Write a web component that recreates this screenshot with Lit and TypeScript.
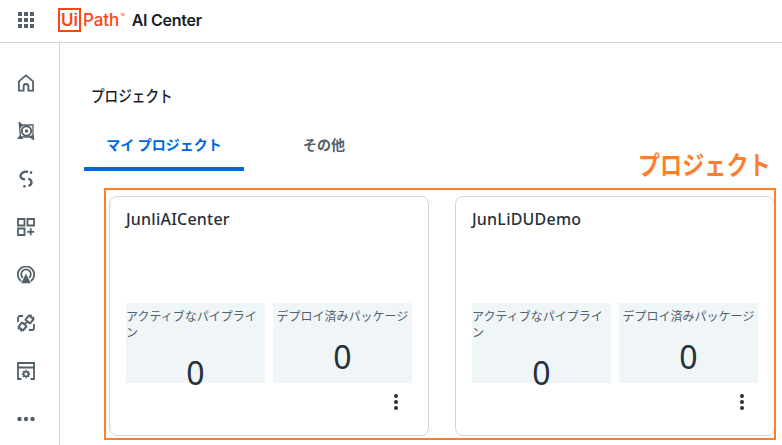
import { LitElement, html, css, svg } from "lit";
import { customElement } from "lit/decorators.js";

const P = "#526069";
const icons = [
  svg`<path d="M1.900 16.600V7.400L9 1.400l7.100 6v9.200h-4.700v-4.200a2.400 2.400 0 0 0-4.800 0v4.200z" fill="none" stroke="${P}" stroke-width="1.800"/>`,
  svg`<path d="M2.200 .6L5 3h11v10.500l.6 4L13 15H3.500L2.200 .6z" fill="none" stroke="${P}" stroke-width="1.300"/><circle cx="9.500" cy="9" r="4.700" fill="#fff" stroke="${P}" stroke-width="1.900"/><circle cx="9.500" cy="9" r="1.700" fill="${P}"/><path d="M0 17h6L3.600 12.500zM2 .6l4 2.900L3 6.500zM17 17.500l-5-3 4.500-2z" fill="${P}"/>`,
  svg`<path d="M11 1.800C6.500 1 3.500 3.500 3.500 6c0 2 2 3 4.500 3.700M11.500 8.500c2 1 3 2.500 3 4 0 1.500-1 2.700-3 3.300" fill="none" stroke="${P}" stroke-width="2.400"/><circle cx="14" cy="2.600" r="1.300" fill="${P}"/><circle cx="7.500" cy="16.200" r="1.300" fill="${P}"/>`,
  svg`<path d="M1 1h6.500v6.500H1zM10.500 1H17v6.500h-6.500zM1 10.500h6.500V17H1z" fill="none" stroke="${P}" stroke-width="1.800"/><path d="M13.700 10.300v7M10.200 13.800h7" fill="none" stroke="${P}" stroke-width="1.800"/>`,
  svg`<path d="M4.200 15.300A8.200 8.200 0 1 1 13.800 15.300" fill="none" stroke="${P}" stroke-width="1.800"/><path d="M5.800 11.800A4.800 4.800 0 1 1 12.200 11.800" fill="none" stroke="${P}" stroke-width="1.800"/><path d="M9 7.500l4.800 9.700H4.200z" fill="${P}"/>`,
  svg`<path d="M1 8V4a2 2 0 0 1 2-2h3M17 10v4a2 2 0 0 1-2 2h-3" fill="none" stroke="${P}" stroke-width="1.800"/><g transform="rotate(40 12.500 5.500)"><rect x="9.500" y="2.700" width="6" height="5.600" rx=".5" fill="none" stroke="${P}" stroke-width="2"/><path d="M11 .6v2.200M14 .6v2.200M12.500 8.300v2.400" stroke="${P}" stroke-width="1.800"/></g><g transform="rotate(40 5.500 12.500)"><rect x="2.500" y="9.700" width="6" height="5.600" rx=".5" fill="none" stroke="${P}" stroke-width="2"/><path d="M4 15.300v2.200M7 15.300v2.200M5.500 7.300v2.400" stroke="${P}" stroke-width="1.800"/></g>`,
  svg`<path d="M4.500 17H1V1h16v16h-3.500M1 5.500h16" fill="none" stroke="${P}" stroke-width="1.800"/><circle cx="9" cy="12" r="2.400" fill="none" stroke="${P}" stroke-width="1.800"/><path d="M9 7.800v1.500M9 14.700v1.500M4.800 12h1.500M11.700 12h1.500M6 9l1 1M11 14l1 1M12 9l-1 1M7 14l-1 1" stroke="${P}" stroke-width="1.400"/>`,
  svg`<circle cx="2.500" cy="9" r="2.200" fill="${P}"/><circle cx="9" cy="9" r="2.200" fill="${P}"/><circle cx="15.500" cy="9" r="2.200" fill="${P}"/>`,
];

const projects = ["JunliAICenter", "JunLiDUDemo"];

@customElement("app-root")
export class AppRoot extends LitElement {
  static styles = css`
    :host {
      display: block;
      width: 782px;
      height: 445px;
      overflow: hidden;
      position: relative;
      background: #fff;
      font-family: "Noto Sans", "Noto Sans CJK JP", sans-serif;
      color: #273139;
    }
    .top {
      height: 42px;
      box-sizing: content-box;
      border-bottom: 1px solid #cfd8dd;
      display: flex;
      align-items: center;
      padding-left: 18px;
    }
    .top > * {
      margin-bottom: 2px;
    }
    .grid-icon {
      display: block;
      margin-right: 25px;
    }
    .logo {
      display: flex;
      align-items: center;
      color: #fa4616;
      font-family: "Inter", sans-serif;
      font-weight: 500;
      font-size: 17px;
      letter-spacing: -0.1px;
      margin-left: -1px;
    }
    .ui {
      box-sizing: border-box;
      width: 23px;
      height: 24px;
      border: 2.500px solid #fa4616;
      display: flex;
      align-items: center;
      justify-content: center;
      margin-right: 2px;
      line-height: 1;
      font-weight: 600;
    }
    .tm {
      font-size: 3px;
      align-self: flex-start;
      margin: 5px 0 0 1px;
    }
    .product {
      font-family: "Inter", sans-serif;
      font-weight: 600;
      font-size: 16px;
      color: #182027;
      margin-left: 7px;
      letter-spacing: -0.25px;
    }
    .body {
      display: flex;
      height: 402px;
    }
    .side {
      box-sizing: border-box;
      width: 60px;
      flex: none;
      border-right: 1px solid #cfd8dd;
      display: flex;
      flex-direction: column;
      padding: 31px 0 0 17px;
      gap: 30px;
    }
    .side svg {
      display: block;
    }
    .main {
      flex: 1;
      min-width: 0;
      padding: 41px 0 0 24px;
    }
    h1 {
      margin: 0 0 0 7px;
      font-size: 16px;
      line-height: 24px;
      font-weight: 500;
      color: #182027;
      transform: scaleX(0.85);
      transform-origin: left;
    }
    .tabs {
      display: flex;
      margin-top: 16px;
    }
    .tab {
      box-sizing: border-box;
      width: 160px;
      height: 47px;
      padding-top: 9px;
      text-align: center;
      font-size: 14px;
      line-height: 24px;
      font-weight: 600;
      color: #526069;
    }
    .tab.on {
      color: #0067df;
      border-bottom: 4px solid #0067df;
    }
    .cards {
      display: grid;
      grid-template-columns: 320px 320px;
      gap: 26px;
      margin: 25px 0 0 25px;
    }
    .card {
      box-sizing: border-box;
      height: 240px;
      border: 1px solid #cfd8dd;
      border-radius: 8px;
      padding: 10px 16px 0;
      display: flex;
      flex-direction: column;
    }
    .name {
      font-size: 16px;
      line-height: 24px;
      font-weight: 500;
      color: #273139;
      letter-spacing: 0.22px;
    }
    .stats {
      display: grid;
      grid-template-columns: 139px 139px;
      gap: 8px;
      margin-top: 72px;
    }
    .stat {
      height: 80px;
      background: #f0f5f8;
      text-align: center;
      font-size: 12px;
      line-height: 16px;
      color: #526069;
      padding-top: 6px;
      box-sizing: border-box;
    }
    .stat .label {
      text-align: left;
      display: block;
    }
    .stat.right .label {
      text-align: center;
    }
    .num {
      font-size: 32px;
      line-height: 40px;
      color: #273139;
      margin-top: 12px;
    }
    .foot {
      display: flex;
      justify-content: flex-end;
      padding: 11px 14px 0 0;
    }
    .note-box {
      position: absolute;
      left: 104px;
      top: 188px;
      width: 672px;
      height: 252px;
      box-sizing: border-box;
      border: 2px solid #fd7f2e;
      pointer-events: none;
    }
    .note {
      position: absolute;
      left: 638px;
      top: 146px;
      font-size: 26px;
      line-height: 36px;
      font-weight: 700;
      color: #fd7f2e;
      font-family: "Noto Sans CJK JP", sans-serif;
      white-space: nowrap;
      transform: scaleX(0.85);
      transform-origin: left;
    }
  `;

  render() {
    return html`
      <div class="top">
        <svg class="grid-icon" width="16" height="16" viewBox="0 0 16 16" fill="${P}">
          ${[0, 6, 12].flatMap((y) => [0, 6, 12].map((x) => svg`<rect x="${x}" y="${y}" width="4" height="4"/>`))}
        </svg>
        <div class="logo"><span class="ui">Ui</span><span>Path</span><span class="tm">TM</span></div>
        <div class="product">AI Center</div>
      </div>
      <div class="body">
        <nav class="side">
          ${icons.map((i) => html`<svg width="18" height="18" viewBox="0 0 18 18">${i}</svg>`)}
        </nav>
        <main class="main">
          <h1>プロジェクト</h1>
          <div class="tabs">
            <div class="tab on">マイ プロジェクト</div>
            <div class="tab">その他</div>
          </div>
          <div class="cards">
            ${projects.map(
              (p) => html`
                <section class="card">
                  <div class="name">${p}</div>
                  <div class="stats">
                    <div class="stat left">
                      <span class="label">アクティブなパイプライン</span>
                      <div class="num">0</div>
                    </div>
                    <div class="stat right">
                      <span class="label">デプロイ済みパッケージ</span>
                      <div class="num">0</div>
                    </div>
                  </div>
                  <div class="foot">
                    <svg width="4" height="16" viewBox="0 0 4 16" fill="#273139">
                      <circle cx="2" cy="2" r="2" /><circle cx="2" cy="8" r="2" /><circle cx="2" cy="14" r="2" />
                    </svg>
                  </div>
                </section>
              `
            )}
          </div>
        </main>
      </div>
      <div class="note-box"></div>
      <div class="note">プロジェクト</div>
    `;
  }
}
